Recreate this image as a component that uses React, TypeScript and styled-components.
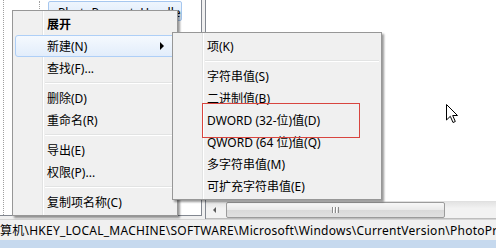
import React from 'react';
import styled, { createGlobalStyle } from 'styled-components';

const GlobalStyle = createGlobalStyle`
	html, body {
		margin: 0;
		padding: 0;
		background: #f0f0f0;
	}
	* {
		box-sizing: border-box;
	}
`;

const MAIN_MENU = [
	{ id: 'expand', label: '展开', bold: true },
	{ id: 'new', label: '新建(N)', active: true, sub: true },
	{ id: 'find', label: '查找(F)...' },
	{ id: 'sep1', separator: true },
	{ id: 'delete', label: '删除(D)' },
	{ id: 'rename', label: '重命名(R)' },
	{ id: 'sep2', separator: true },
	{ id: 'export', label: '导出(E)' },
	{ id: 'perm', label: '权限(P)...' },
	{ id: 'sep3', separator: true },
	{ id: 'copy', label: '复制项名称(C)' },
];

const NEW_MENU = [
	{ id: 'key', label: '项(K)' },
	{ id: 'sep1', separator: true },
	{ id: 'sz', label: '字符串值(S)' },
	{ id: 'bin', label: '二进制值(B)' },
	{ id: 'dword', label: 'DWORD (32-位)值(D)' },
	{ id: 'qword', label: 'QWORD (64 位)值(Q)' },
	{ id: 'multi', label: '多字符串值(M)' },
	{ id: 'expand', label: '可扩充字符串值(E)' },
];

type Entry = {
	id: string;
	label?: string;
	bold?: boolean;
	active?: boolean;
	sub?: boolean;
	separator?: boolean;
};

const MenuList = ({ items }: { items: Entry[] }) => (
	<>
		{items.map((item) =>
			item.separator ? (
				<Separator key={item.id} />
			) : (
				<MenuItem key={item.id} $bold={item.bold} $active={item.active}>
					<span>{item.label}</span>
					{item.sub && <SubArrow />}
				</MenuItem>
			),
		)}
	</>
);

const FolderIcon = () => (
	<svg width="10" height="9" viewBox="0 0 10 9">
		<path d="M0.5 1.5h3.5l1 1h4.5v6h-9z" fill="#f1cf6e" stroke="#c9a040" />
		<path d="M0.5 3.5h9" stroke="#fbe6a6" />
	</svg>
);

const Cursor = () => (
	<svg width="13" height="20" viewBox="0 0 13 20">
		<path
			d="M0.5 0.5 L0.5 16 L4.3 12.3 L7 18.5 L9.3 17.5 L6.7 11.5 L11.5 11.5 Z"
			fill="#fff"
			stroke="#000"
			strokeWidth="1"
		/>
	</svg>
);

const App = () => {
	return (
		<>
			<GlobalStyle />
			<Screen>
				<Workspace>
					<TreePane>
						<TreeGuide />
						<TreeColumn>
							<TreeRow>
								<TreeGuideStub />
								<SelectedNode>
									<FolderIcon />
									<NodeLabel>PhotoPropertyHandler</NodeLabel>
								</SelectedNode>
							</TreeRow>
						</TreeColumn>
					</TreePane>
					<Splitter />
					<ListPane>
						<ListBody />
						<HScroll>
							<ScrollButton>
								<LeftTri />
							</ScrollButton>
							<ScrollThumb $width={219}>
								<Grip />
							</ScrollThumb>
						</HScroll>
					</ListPane>
				</Workspace>
				<StatusBar>算机\HKEY_LOCAL_MACHINE\SOFTWARE\Microsoft\Windows\CurrentVersion\PhotoPropertyHandler</StatusBar>
				<TaskBand />

				<ContextMenu $left={12} $top={10} $width={166}>
					<MenuList items={MAIN_MENU} />
				</ContextMenu>
				<ContextMenu $left={172} $top={32} $width={210}>
					<MenuList items={NEW_MENU} />
				</ContextMenu>
				<Annotation />
				<CursorSpot>
					<Cursor />
				</CursorSpot>
			</Screen>
		</>
	);
};
export default App;

const Screen = styled.div`
	position: relative;
	width: 496px;
	height: 248px;
	overflow: hidden;
	background: #f0f0f0;
	display: flex;
	flex-direction: column;
	font-family: 'Noto Sans', 'Noto Sans CJK SC', sans-serif;
	font-size: 12px;
	color: #000;
`;

const Workspace = styled.div`
	height: 219px;
	display: flex;
`;

const TreePane = styled.div`
	width: 202px;
	height: 216px;
	background: #fff;
	border-right: 1px solid #828790;
	border-bottom: 1px solid #828790;
	display: flex;
`;

const TreeGuide = styled.div`
	width: 4px;
	border-right: 1px dotted #a0a0a0;
`;

const TreeColumn = styled.div`
	flex: 1;
	display: flex;
	flex-direction: column;
`;

const TreeRow = styled.div`
	display: flex;
	align-items: flex-start;
	padding-left: 35px;
	padding-top: 1px;
`;

const TreeGuideStub = styled.div`
	width: 9px;
	height: 12px;
	border-left: 1px dotted #a0a0a0;
`;

const SelectedNode = styled.div`
	width: 134px;
	height: 20px;
	display: flex;
	align-items: center;
	gap: 7px;
	padding-left: 2px;
	border: 1px solid #a6c7ef;
	border-radius: 2px;
	background: linear-gradient(#eef5fd, #dbe9fa);
	overflow: hidden;
	white-space: nowrap;
`;

const NodeLabel = styled.span`
	line-height: 14px;
	padding-top: 4px;
`;

const Splitter = styled.div`
	width: 3px;
`;

const ListPane = styled.div`
	flex: 1;
	display: flex;
	flex-direction: column;
	background: #fff;
	border-left: 1px solid #828790;
`;

const ListBody = styled.div`
	flex: 1;
`;

const HScroll = styled.div`
	height: 18px;
	display: flex;
	align-items: center;
	background: linear-gradient(#e3e3e3, #f2f2f2 40%, #f2f2f2);
	border-top: 1px solid #e0e0e0;
	border-bottom: 1px solid #bdbdbd;
`;

const ScrollButton = styled.div`
	width: 17px;
	height: 100%;
	display: flex;
	align-items: center;
	justify-content: center;
`;

const LeftTri = styled.div`
	width: 0;
	height: 0;
	border-top: 3px solid transparent;
	border-bottom: 3px solid transparent;
	border-right: 3px solid #5a5a5a;
`;

const ScrollThumb = styled.div<{ $width: number }>`
	width: ${({ $width }) => $width}px;
	height: 16px;
	margin-left: 3px;
	border: 1px solid #9b9b9b;
	border-radius: 2px;
	background: linear-gradient(#f7f7f7, #e9e9e9 50%, #d9d9d9 51%, #e1e1e1);
	display: flex;
	align-items: center;
	justify-content: center;
`;

const Grip = styled.div`
	width: 7px;
	height: 6px;
	background: repeating-linear-gradient(to right, #8a8a8a 0 1px, #fff 1px 2px, transparent 2px 3px);
`;

const StatusBar = styled.div`
	height: 21px;
	padding-top: 1px;
	line-height: 19px;
	white-space: nowrap;
	overflow: hidden;
	letter-spacing: 0.25px;
	border-top: 1px solid #d5d5d5;
`;

const TaskBand = styled.div`
	flex: 1;
	background: #c6d9ee;
`;

const ContextMenu = styled.div<{ $left: number; $top: number; $width: number }>`
	position: absolute;
	left: ${({ $left }) => $left}px;
	top: ${({ $top }) => $top}px;
	width: ${({ $width }) => $width}px;
	padding: 2px;
	border: 1px solid #979797;
	background:
		linear-gradient(
			to right,
			transparent 29px,
			#e2e3e3 29px,
			#e2e3e3 30px,
			#ffffff 30px,
			#ffffff 31px,
			transparent 31px
		),
		#f0f0f0;
	box-shadow: 2px 2px 2px rgba(0, 0, 0, 0.4);
	display: flex;
	flex-direction: column;
`;

const MenuItem = styled.div<{ $bold?: boolean; $active?: boolean }>`
	height: 22px;
	display: flex;
	align-items: center;
	justify-content: space-between;
	padding: 0 10px 1px 31px;
	white-space: nowrap;
	font-weight: ${({ $bold }) => ($bold ? 700 : 400)};
	border: 1px solid ${({ $active }) => ($active ? '#aecff7' : 'transparent')};
	border-radius: 3px;
	background: ${({ $active }) => ($active ? 'linear-gradient(#f5f9fe, #e2edfb)' : 'transparent')};
`;

const SubArrow = styled.div`
	width: 0;
	height: 0;
	border-top: 4px solid transparent;
	border-bottom: 4px solid transparent;
	border-left: 4px solid #000;
`;

const Separator = styled.div`
	height: 8px;
	margin-left: 30px;
	display: flex;
	flex-direction: column;
	justify-content: center;

	&::before {
		content: '';
		height: 1px;
		background: #e2e3e3;
	}
	&::after {
		content: '';
		height: 1px;
		background: #fff;
	}
`;

const Annotation = styled.div`
	position: absolute;
	left: 202px;
	top: 103px;
	width: 158px;
	height: 35px;
	border: 1px solid #d8453f;
`;

const CursorSpot = styled.div`
	position: absolute;
	left: 446px;
	top: 104px;
	line-height: 0;
`;
